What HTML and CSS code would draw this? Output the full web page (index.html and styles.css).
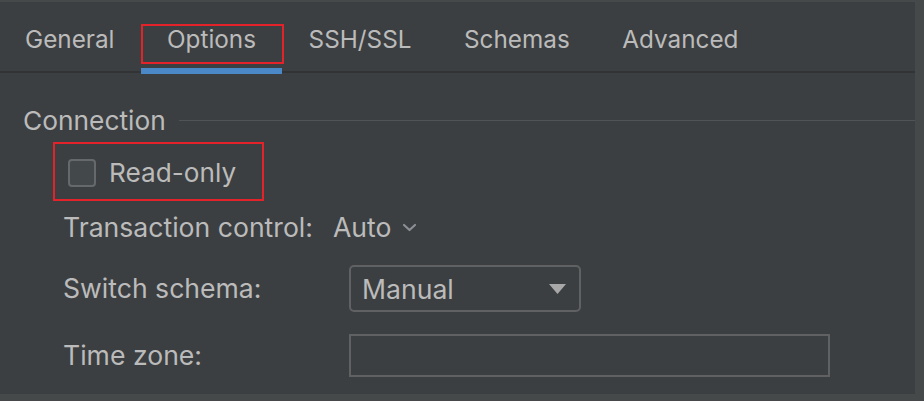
FILE: index.html
```html
<!DOCTYPE html>
<html>
<head>
<meta charset="utf-8">
<link rel="stylesheet" href="styles.css">
</head>
<body>
<div class="window">
  <div class="tabs">
    <div class="tab">General</div>
    <div class="tab active">Options</div>
    <div class="tab">SSH/SSL</div>
    <div class="tab">Schemas</div>
    <div class="tab">Advanced</div>
  </div>
  <div class="content">
    <div class="title-row">
      <span class="title">Connection</span>
      <span class="title-line"></span>
    </div>
    <div class="row check-row">
      <span class="checkbox"></span>
      <span class="label">Read-only</span>
    </div>
    <div class="row tx-row">
      <span class="label">Transaction control:</span>
      <span class="link-combo">Auto
        <svg class="chev" width="15" height="9" viewBox="0 0 15 9"><path d="M2 2 L7.5 7 L13 2" fill="none" stroke="#8a9095" stroke-width="2.2" stroke-linecap="round" stroke-linejoin="round"/></svg>
      </span>
    </div>
    <div class="row form-row switch-row">
      <span class="label form-label">Switch schema:</span>
      <div class="combo">
        <span class="combo-text">Manual</span>
        <svg class="tri" width="17" height="10" viewBox="0 0 17 10"><path d="M0 0 H17 L8.5 10 Z" fill="#a8a8a8"/></svg>
      </div>
    </div>
    <div class="row form-row tz-row">
      <span class="label form-label">Time zone:</span>
      <div class="field"></div>
    </div>
  </div>
  <div class="mark mark-tab"></div>
  <div class="mark mark-check"></div>
</div>
</body>
</html>
```

FILE: styles.css
```css
html, body {
  margin: 0;
  padding: 0;
}
body {
  background: #45494a;
  width: 924px;
  height: 401px;
  overflow: hidden;
  font-family: "Inter", "Liberation Sans", sans-serif;
  color: #bbbbbb;
}
.window {
  position: relative;
  margin-top: 2px;
  width: 915px;
  height: 392px;
  background: #3c3f41;
}
.tabs {
  display: flex;
  height: 69px;
  border-bottom: 2px solid #313335;
}
.tab {
  position: relative;
  display: flex;
  align-items: center;
  padding: 4px 26px 0 26.5px;
  font-size: 24.3px;
  color: #bbbbbb;
}
.tab:first-child {
  padding-left: 25px;
}
.tab.active::after {
  content: "";
  position: absolute;
  left: 0;
  right: 0;
  bottom: -3px;
  height: 6px;
  background: #4a88c7;
}
.content {
  display: flex;
  flex-direction: column;
}
.title-row {
  display: flex;
  align-items: center;
  height: 40px;
  margin-top: 27px;
  padding-left: 23px;
}
.title {
  font-size: 26.3px;
}
.title-line {
  flex: 1;
  height: 1px;
  background: #515456;
  margin-left: 13px;
  margin-top: 1px;
}
.row {
  display: flex;
  align-items: center;
  padding-left: 63px;
  font-size: 26.6px;
}
.check-row {
  height: 45px;
  margin-top: 10px;
  padding-left: 68px;
  font-size: 26.2px;
}
.checkbox {
  width: 24px;
  height: 24px;
  border: 2px solid #66696b;
  border-radius: 4px;
  background: #43494a;
  margin-right: 13px;
}
.tx-row {
  height: 45px;
  margin-top: 9px;
}
.link-combo {
  display: flex;
  align-items: center;
  margin-left: 20px;
}
.chev {
  margin-left: 11px;
  margin-top: 2px;
}
.form-label {
  width: 286px;
}
.switch-row {
  height: 47px;
  margin-top: 16px;
}
.form-label {
  margin-top: -1px;
}
.combo {
  box-sizing: border-box;
  width: 232px;
  height: 47px;
  border: 2px solid #5f6163;
  border-radius: 5px;
  display: flex;
  align-items: center;
  justify-content: space-between;
  padding: 0 13px 0 11px;
}
.tz-row {
  height: 43px;
  margin-top: 22px;
}
.field {
  box-sizing: border-box;
  width: 481px;
  height: 43px;
  border: 2px solid #5f6163;
}
.mark {
  position: absolute;
  box-sizing: border-box;
  border: 2px solid #e3222a;
}
.mark-tab {
  left: 141px;
  top: 22px;
  width: 143px;
  height: 40px;
}
.mark-check {
  left: 53px;
  top: 140px;
  width: 211px;
  height: 59px;
}
```
